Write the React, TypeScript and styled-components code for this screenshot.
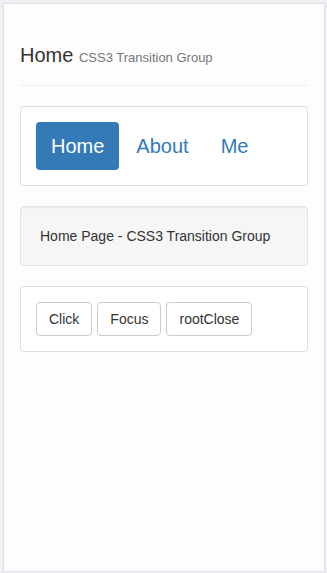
import React, { useState } from 'react'
import styled, { createGlobalStyle } from 'styled-components'

const GlobalStyle = createGlobalStyle`
  html, body {
    margin: 0;
    padding: 0;
    background: #eef0f4;
  }
  body {
    padding: 3px;
    font-family: "Liberation Sans", Arial, Helvetica, sans-serif;
    font-size: 14px;
    line-height: 1.42857;
    color: #333;
  }
  * { box-sizing: border-box; }
`

const Frame = styled.div`
  width: 322px;
  height: 569px;
  border: 1px solid #dfe2e7;
  background: #fdfdfd;
  padding: 0 16px;
  display: flow-root;
`

const PageHeader = styled.div`
  margin: 40px 0 20px;
  padding-bottom: 9px;
  border-bottom: 1px solid #eee;
`

const Title = styled.h1`
  margin: 0 0 10px;
  font-size: 20px;
  font-weight: 500;
  line-height: 22px;
  color: #333;
`

const Small = styled.small`
  font-size: 13px;
  font-weight: 400;
  line-height: 0;
  color: #777;
`

const Card = styled.div`
  border: 1px solid #ddd;
  border-radius: 4px;
  padding: 15px;
  margin-bottom: 20px;
  background: #fff;
`

const Pills = styled.ul`
  list-style: none;
  margin: 0;
  padding: 0;
  display: flex;
  gap: 2px;
`

const Pill = styled.li<{ $active?: boolean }>`
  padding: 10px 15px;
  font-size: 20px;
  line-height: 28px;
  border-radius: 4px;
  cursor: pointer;
  color: ${p => (p.$active ? '#fff' : '#337ab7')};
  background: ${p => (p.$active ? '#337ab7' : 'transparent')};
`

const Well = styled.div`
  min-height: 20px;
  padding: 19px;
  margin-bottom: 20px;
  background: #f6f6f6;
  border: 1px solid #e3e3e3;
  border-radius: 4px;
  box-shadow: inset 0 1px 1px rgba(0, 0, 0, 0.05);
  font-size: 14px;
  line-height: 20px;
`

const ButtonRow = styled.div`
  display: flex;
  gap: 5px;
`

const Button = styled.button`
  font-family: inherit;
  font-size: 14px;
  line-height: 20px;
  padding: 6px 12px;
  color: #333;
  background: #fff;
  border: 1px solid #ccc;
  border-radius: 4px;
  cursor: pointer;
`

const pages = ['Home', 'About', 'Me']

export default function App() {
  const [active, setActive] = useState<string>('Home')

  return (
    <>
      <GlobalStyle />
      <Frame>
        <PageHeader>
          <Title>
            {active} <Small>CSS3 Transition Group</Small>
          </Title>
        </PageHeader>
        <Card>
          <Pills>
            {pages.map(page => (
              <Pill key={page} $active={active === page} onClick={() => setActive(page)}>
                {page}
              </Pill>
            ))}
          </Pills>
        </Card>
        <Well>{active} Page - CSS3 Transition Group</Well>
        <Card>
          <ButtonRow>
            <Button>Click</Button>
            <Button>Focus</Button>
            <Button>rootClose</Button>
          </ButtonRow>
        </Card>
      </Frame>
    </>
  )
}
